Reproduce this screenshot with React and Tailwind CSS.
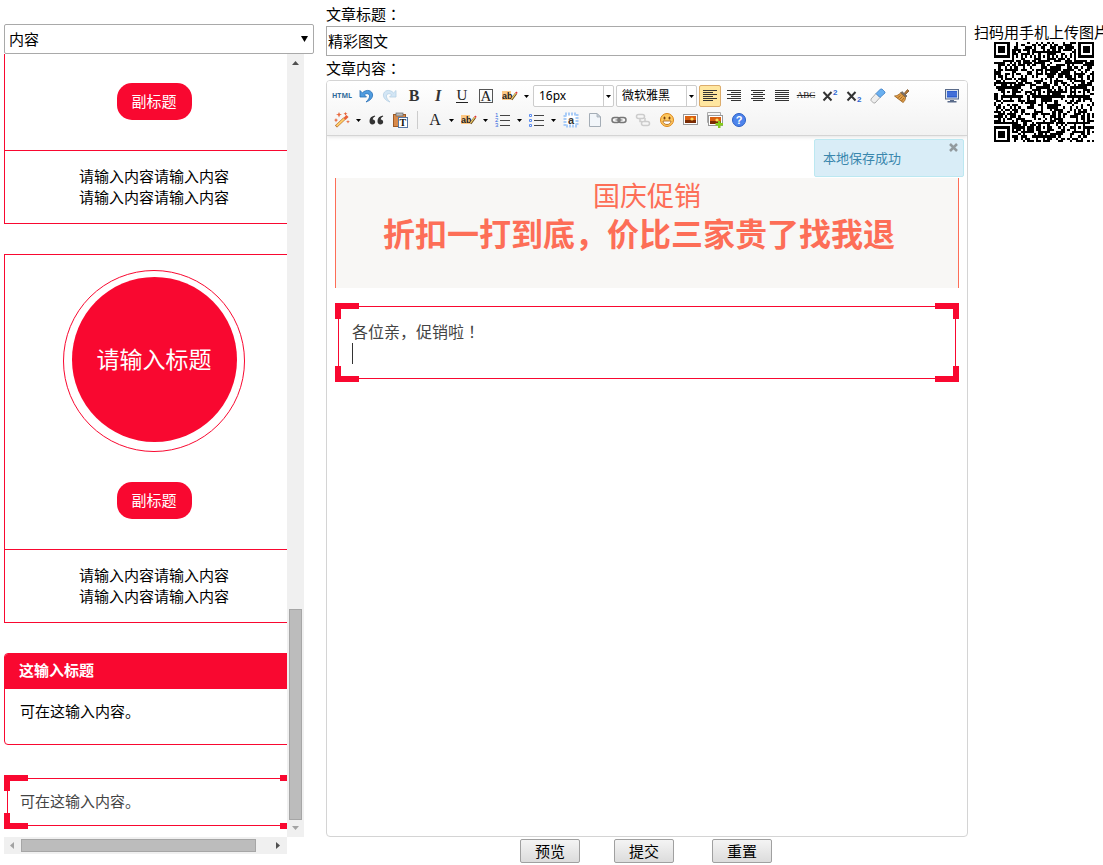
import { useState } from 'react';

const QR_SIZE = 45;

function finderCell(x, y) {
  const d = Math.max(Math.abs(x - 3), Math.abs(y - 3));
  return d !== 2 && d < 4;
}

function qrCells() {
  const cells = [];
  const centers = [6, 22, 38];
  let seed = 20141;
  for (let y = 0; y < QR_SIZE; y++) {
    for (let x = 0; x < QR_SIZE; x++) {
      seed = (seed * 1103515245 + 12345) % 2147483648;
      let on = (seed >> 12) % 100 < 52;
      if (x === 6 || y === 6) on = (x + y) % 2 === 0;
      centers.forEach((cy) =>
        centers.forEach((cx) => {
          const d = Math.max(Math.abs(x - cx), Math.abs(y - cy));
          if (d < 3) on = d !== 1;
        })
      );
      if (x < 8 && y < 8) on = finderCell(x, y);
      if (x > 36 && y < 8) on = finderCell(x - 38, y);
      if (x < 8 && y > 36) on = finderCell(x, y - 38);
      if (on) cells.push(`M${x} ${y}h1v1h-1z`);
    }
  }
  return cells.join('');
}

function QrCode() {
  return (
    <svg className="w-[100px] h-[100px]" viewBox="0 0 45 45" shapeRendering="crispEdges" role="img" aria-label="二维码">
      <path d={qrCells()} fill="#000" />
    </svg>
  );
}

function Icon({ children }) {
  return (
    <svg className="w-4 h-4" viewBox="0 0 16 16" fill="none">
      {children}
    </svg>
  );
}

function Caret() {
  return (
    <svg className="w-[5px] h-[3px]" viewBox="0 0 5 3">
      <path d="M0 0h5L2.5 3z" fill="#000" />
    </svg>
  );
}

function Tool({ title, active, menu, children }) {
  return (
    <button
      type="button"
      title={title}
      aria-label={title}
      className={
        active
          ? 'flex h-[22px] shrink-0 items-center rounded-xs border border-[#dcac6c] bg-[#ffe69f]'
          : 'flex h-[22px] shrink-0 items-center'
      }
    >
      <span className={active ? 'flex w-5 justify-center' : 'flex w-[22px] justify-center'}>{children}</span>
      {menu && (
        <span className="flex w-[10px] justify-center">
          <Caret />
        </span>
      )}
    </button>
  );
}

function Combo({ label, options }) {
  return (
    <div className="relative h-[22px] w-[81px] shrink-0">
      <select
        aria-label={label}
        className="block h-[22px] w-full appearance-none rounded-xs border border-[#ccc] bg-white pl-[5px] text-xs leading-5 text-black"
      >
        {options.map((o) => (
          <option key={o}>{o}</option>
        ))}
      </select>
      <span className="pointer-events-none absolute inset-y-px right-px flex w-[10px] items-center justify-center border-l border-[#ccc]">
        <Caret />
      </span>
    </div>
  );
}

function Lines({ rows }) {
  return (
    <Icon>
      {rows.map(([x, w], i) => (
        <rect key={i} x={x} y={2 + i * 2} width={w} height="1" fill="#333" />
      ))}
    </Icon>
  );
}

function Highlight() {
  return (
    <Icon>
      <rect x="0" y="3" width="9" height="9" fill="#fdc883" />
      <text x="0" y="11" fontSize="9" fontWeight="bold" fill="#222" fontFamily="Liberation Sans">
        ab
      </text>
      <path d="M14 5.500 9.500 11.500" stroke="#6b4a1a" strokeWidth="2.200" />
      <path d="M14 5 9.500 11" stroke="#f6d36b" strokeWidth="1.200" />
      <path d="m13.200 4.700 1.500 1.300 1-1.200-1.500-1.300z" fill="#e0353b" />
    </Icon>
  );
}

function Undo({ color, edge }) {
  return (
    <path
      d="M2 2.500v6.500h6.500L6.300 6.800c2.500-2.300 6-.800 5.200 2.200-.4 1.600-1.500 3-3.500 5 4-1.300 6.600-3.800 6.600-7C14.600 2.300 8.300.600 4.400 4.900z"
      fill={color}
      stroke={edge}
      strokeWidth=".8"
    />
  );
}

function Picture({ x = 0, y = 2 }) {
  return (
    <>
      <rect x={x + 0.5} y={y + 0.5} width="14" height="10" fill="#fff" stroke="#999" />
      <rect x={x + 2} y={y + 2} width="11" height="7" fill="#d9600f" />
      <rect x={x + 2} y={y + 6} width="11" height="3" fill="#7a2b04" />
      <circle cx={x + 9} cy={y + 5} r="1.600" fill="#ffd75a" />
    </>
  );
}

function ToolbarTop() {
  return (
    <div className="flex items-center gap-[2px]">
      <Tool title="源代码">
        <span className="font-['Open_Sans'] text-[7px] font-bold text-[#2f6a9a]">HTML</span>
      </Tool>
      <Tool title="撤销">
        <Icon>
          <Undo color="#4f9ce0" edge="#2a6fb5" />
        </Icon>
      </Tool>
      <Tool title="重做">
        <Icon>
          <g transform="matrix(-1 0 0 1 16 0)">
            <Undo color="#d3e6f5" edge="#b6d0e5" />
          </g>
        </Icon>
      </Tool>
      <Tool title="加粗">
        <span className="font-['Liberation_Serif'] text-base font-bold text-[#333]">B</span>
      </Tool>
      <Tool title="斜体">
        <span className="font-['Liberation_Serif'] text-base font-bold italic text-[#333]">I</span>
      </Tool>
      <Tool title="下划线">
        <span className="border-b border-[#222] px-px font-['Liberation_Serif'] text-[15px] leading-[13px] text-[#222]">U</span>
      </Tool>
      <Tool title="字符边框">
        <span className="flex h-3.5 w-3.5 items-center justify-center border border-[#555] font-['Liberation_Serif'] text-[15px] text-[#222]">
          A
        </span>
      </Tool>
      <Tool title="突出显示" menu>
        <Highlight />
      </Tool>
      <Combo label="字号" options={['16px', '12px', '14px', '18px', '24px']} />
      <Combo label="字体" options={['微软雅黑', '宋体', '黑体']} />
      <Tool title="居左对齐" active>
        <Lines rows={[[1, 14], [1, 10], [1, 14], [1, 10], [1, 14], [1, 10]]} />
      </Tool>
      <Tool title="居右对齐">
        <Lines rows={[[1, 14], [5, 10], [1, 14], [5, 10], [1, 14], [5, 10]]} />
      </Tool>
      <Tool title="居中对齐">
        <Lines rows={[[1, 14], [3, 10], [1, 14], [3, 10], [1, 14], [3, 10]]} />
      </Tool>
      <Tool title="两端对齐">
        <Lines rows={[[1, 14], [1, 14], [1, 14], [1, 14], [1, 14], [1, 14]]} />
      </Tool>
      <Tool title="删除线">
        <span className="font-['Liberation_Serif'] text-[9px] text-[#222] line-through">ABC</span>
      </Tool>
      <Tool title="上标">
        <Icon>
          <path d="m1.500 4 8 8.500M9.500 4l-8 8.500" stroke="#333" strokeWidth="2" />
          <text x="11" y="7" fontSize="8" fontWeight="bold" fill="#2f66d0" fontFamily="Liberation Sans">2</text>
        </Icon>
      </Tool>
      <Tool title="下标">
        <Icon>
          <path d="m1.500 4 8 8.500M9.500 4l-8 8.500" stroke="#333" strokeWidth="2" />
          <text x="11" y="14" fontSize="8" fontWeight="bold" fill="#2f66d0" fontFamily="Liberation Sans">2</text>
        </Icon>
      </Tool>
      <Tool title="清除格式">
        <Icon>
          <path d="m1 11 5-5.500 4 4-5 5.500H3.500L1 12.500z" fill="#eee" stroke="#999" strokeWidth=".8" />
          <path d="m6 5.500 4.500-4.500H12l3 3v1l-5 4.500z" fill="#6ab0f0" stroke="#3f7fc4" strokeWidth=".8" />
        </Icon>
      </Tool>
      <Tool title="格式刷">
        <Icon>
          <path d="m10.500 5 3-3.500L15 3l-3.500 3.500z" fill="#b5793a" stroke="#754919" strokeWidth=".7" />
          <path d="M8 3.500 13 8l-1.500 1.500L6.500 5z" fill="#7a716a" stroke="#4c443d" strokeWidth=".5" />
          <path d="M6.500 5 11.500 9.500c0 2-1 4-2.500 5L.500 8C3 8 5 6.500 6.500 5z" fill="#e2a04a" stroke="#965d1b" strokeWidth=".8" />
          <path d="m3.500 10 3-2.500m-1 4 3-3m-1 4.500 2.500-3" stroke="#965d1b" strokeWidth=".8" />
        </Icon>
      </Tool>
      <div className="ml-auto">
        <Tool title="全屏">
          <Icon>
            <rect x="1.500" y="1.500" width="13" height="9.500" fill="#d9e2ee" stroke="#5a6b8a" />
            <rect x="3" y="3" width="10" height="6.500" fill="#2f5fd0" />
            <path d="M3 5h10M3 7h10" stroke="#6f95ea" strokeWidth=".6" />
            <path d="M6 12h4v1H6zM3.500 13h9v1.500h-9z" fill="#5a6b8a" />
          </Icon>
        </Tool>
      </div>
    </div>
  );
}

function ToolbarBottom() {
  return (
    <div className="flex items-center gap-[2px]">
      <Tool title="自动排版" menu>
        <Icon>
          <path d="m2 14.500 8.500-8" stroke="#b05f25" strokeWidth="3" />
          <path d="m2.500 14 8-7.500" stroke="#ffcf6b" strokeWidth="1.800" />
          <path d="m10.500 7 3-3" stroke="#e8603a" strokeWidth="3" />
          <path d="m5 0 .9 1.900 2.100.6-2.100.8L5 5.500l-.9-2.200L2 2.500l2.100-.6zM11.500 0l.7 1.200 1.400.4-1.400.7-.7 1.400-.7-1.400-1.400-.7 1.400-.4zM2 6l.7 1.600 1.600.5-1.600.7L2 10.500l-.7-1.700L0 8.100l1.300-.5zM14 8l.6 1.200 1.400.4-1.400.6-.6 1.300-.6-1.300-1.400-.6 1.400-.4z" fill="#e8683c" />
        </Icon>
      </Tool>
      <Tool title="引用">
        <Icon>
          <path d="M7 3.500C3.500 4 1.500 6 1.500 9c0 2 1 3.500 2.900 3.500C6 12.500 7.200 11.400 7.200 10S6.200 7.500 4.800 7.500c0-1.400.8-2.500 2.400-3zM15 3.500c-3.500.5-5.500 2.500-5.500 5.500 0 2 1 3.500 2.900 3.500 1.600 0 2.800-1.100 2.800-2.500s-1-2.500-2.400-2.500c0-1.400.8-2.500 2.400-3z" fill="#333" />
        </Icon>
      </Tool>
      <Tool title="只粘贴文本">
        <Icon>
          <rect x="1.500" y="2.500" width="12" height="12" fill="#d98a4a" stroke="#9c5a25" />
          <rect x="4" y="1" width="7" height="3" fill="#bbb" stroke="#666" strokeWidth=".7" />
          <rect x="6.500" y="5.500" width="9" height="10" fill="#fff" stroke="#5577a5" />
          <text x="7.500" y="14" fontSize="10" fontWeight="bold" fill="#111" fontFamily="Liberation Serif">T</text>
        </Icon>
      </Tool>
      <span className="mx-1 h-[18px] w-px bg-[#ccc]" />
      <Tool title="字体颜色" menu>
        <span className="font-['Liberation_Serif'] text-base text-[#222]">A</span>
      </Tool>
      <Tool title="背景色" menu>
        <Highlight />
      </Tool>
      <Tool title="有序列表" menu>
        <Icon>
          <text x="0" y="5" fontSize="6" fill="#2f66e0" fontFamily="Liberation Sans">1</text>
          <text x="0" y="10" fontSize="6" fill="#2f66e0" fontFamily="Liberation Sans">2</text>
          <text x="0" y="15" fontSize="6" fill="#2f66e0" fontFamily="Liberation Sans">3</text>
          <path d="M5 3.500h10M5 8.500h10M5 13.500h10" stroke="#444" />
        </Icon>
      </Tool>
      <Tool title="无序列表" menu>
        <Icon>
          <path d="M5 3.500h10M5 8.500h10M5 13.500h10" stroke="#444" />
          <path d="M.5 2.500h2v2h-2zM.5 7.500h2v2h-2zM.5 12.500h2v2h-2z" stroke="#5b8cf0" />
        </Icon>
      </Tool>
      <Tool title="锚点">
        <Icon>
          <rect x="2" y="2" width="12" height="12" fill="#fff" stroke="#a9ccf7" strokeWidth="3" strokeDasharray="2 1" />
          <text x="5" y="12" fontSize="11" fontWeight="bold" fill="#333" fontFamily="Liberation Sans">a</text>
        </Icon>
      </Tool>
      <Tool title="模板">
        <Icon>
          <path d="M2.500 1.500H10L13.500 5v9.500h-11z" fill="#f2f6fa" stroke="#a4adb6" />
          <path d="M10 1.500V5h3.500z" fill="#c9d3dd" stroke="#a4adb6" strokeWidth=".8" />
        </Icon>
      </Tool>
      <Tool title="超链接">
        <Icon>
          <rect x="1" y="5.500" width="8" height="5" rx="2.500" stroke="#777" strokeWidth="1.500" />
          <rect x="7" y="5.500" width="8" height="5" rx="2.500" stroke="#777" strokeWidth="1.500" />
          <path d="M4.500 8h7" stroke="#777" strokeWidth="1.200" />
        </Icon>
      </Tool>
      <Tool title="取消链接">
        <Icon>
          <rect x="1.500" y="2.500" width="8" height="4" rx="2" stroke="#ccc" strokeWidth="1.500" />
          <rect x="6.500" y="9.500" width="8" height="4" rx="2" stroke="#ccc" strokeWidth="1.500" />
          <path d="M5 6.500v3h2M10 6v3" stroke="#ccc" strokeWidth="1.500" />
        </Icon>
      </Tool>
      <Tool title="表情">
        <Icon>
          <circle cx="8" cy="8" r="6.500" fill="#fdc860" stroke="#dd8518" />
          <ellipse cx="5.500" cy="6" rx="1" ry="1.500" fill="#7a4210" />
          <ellipse cx="10.500" cy="6" rx="1" ry="1.500" fill="#7a4210" />
          <path d="M4 9h8c0 2-1.800 3.500-4 3.500S4 11 4 9z" fill="#fff" stroke="#a55c10" strokeWidth=".8" />
        </Icon>
      </Tool>
      <Tool title="图片">
        <Icon>
          <Picture />
        </Icon>
      </Tool>
      <Tool title="多图上传">
        <Icon>
          <path d="M.5.500h13v10H.5z" fill="#f5f5f5" stroke="#aaa" />
          <Picture x={1} y={3} />
          <path d="M11 9h2.500v2H16v2.500h-2.500V16H11v-2.500H8.500V11H11z" fill="#84cc1c" />
        </Icon>
      </Tool>
      <Tool title="帮助">
        <Icon>
          <circle cx="8" cy="8" r="6.500" fill="#4d84ec" stroke="#2b5fc4" />
          <text x="8" y="12" textAnchor="middle" fontSize="11" fontWeight="bold" fill="#fff" fontFamily="Liberation Sans">?</text>
        </Icon>
      </Tool>
    </div>
  );
}

// full-width punctuation that sits in the middle of its cell
function Mark({ children }) {
  return <span className="font-['Noto_Sans_CJK_JP',sans-serif]">{children}</span>;
}

function CornerFrame({ children }) {
  const corner = 'absolute h-4 w-6 border-[#f90830]';
  return (
    <div className="relative p-[3px]">
      <span className={`${corner} top-0 left-0 border-t-6 border-l-6`} />
      <span className={`${corner} top-0 right-0 border-t-6 border-r-6`} />
      <span className={`${corner} bottom-0 left-0 border-b-6 border-l-6`} />
      <span className={`${corner} right-0 bottom-0 border-r-6 border-b-6`} />
      <div className="border border-[#f90830] text-[#444]">{children}</div>
    </div>
  );
}

function TitleCard({ round }) {
  return (
    <section className={round ? 'border border-[#f90830] pt-[15px]' : 'border border-t-0 border-[#f90830] pt-[29px]'}>
      {round && (
        <div className="mx-auto mb-[30px] flex h-[182px] w-[182px] justify-center rounded-full border border-[#f90830] pt-[6px]">
          <h2 className="flex h-[165px] w-[165px] items-center justify-center rounded-full bg-[#f90830] text-[23px] text-white">
            请输入标题
          </h2>
        </div>
      )}
      <h3 className="mx-auto mb-[30px] flex h-[37px] w-[75px] items-center justify-center rounded-[15px] bg-[#f90830] text-white">
        副标题
      </h3>
      <div className="border-t border-[#f90830] py-[15px] text-center leading-[21px]">
        <p>请输入内容请输入内容</p>
        <p>请输入内容请输入内容</p>
      </div>
    </section>
  );
}

function Templates() {
  return (
    <div className="grid w-[300px] grid-cols-[283px_17px]">
      <div className="overflow-hidden">
        <div className="flex w-[300px] flex-col gap-[30px] pb-2">
          <TitleCard />
          <TitleCard round />
          <section className="overflow-hidden rounded border border-[#f90830]">
            <h3 className="bg-[#f90830] px-3.5 pt-[6px] pb-2 font-bold leading-[21px] text-white">这输入标题</h3>
            <p className="px-[15px] pt-3 pb-[22px] leading-[21px]">可在这输入内容。</p>
          </section>
          <CornerFrame>
            <p className="px-3 pt-3 pb-3.5 leading-5">可在这输入内容。</p>
          </CornerFrame>
        </div>
      </div>
      <div className="flex flex-col items-center bg-[#f0f0f0]">
        <svg className="h-[17px] w-[17px]" viewBox="0 0 17 17">
          <path d="M5 11h7L8.500 7z" fill="#505050" />
        </svg>
        <div className="mt-auto h-[211px] w-[13px] border border-[#a6a6a6] bg-[#bcbcbc]" />
        <svg className="h-[17px] w-[17px]" viewBox="0 0 17 17">
          <path d="M5 6h7l-3.500 4z" fill="#a3a3a3" />
        </svg>
      </div>
      <div className="flex items-center bg-[#f0f0f0]">
        <svg className="h-[17px] w-[17px]" viewBox="0 0 17 17">
          <path d="M10 5v7L6 8.500z" fill="#a3a3a3" />
        </svg>
        <div className="h-[13px] w-[235px] border border-[#a6a6a6] bg-[#bcbcbc]" />
        <svg className="ml-auto h-[17px] w-[17px]" viewBox="0 0 17 17">
          <path d="M6 5v7l4-3.500z" fill="#505050" />
        </svg>
      </div>
    </div>
  );
}

function FormButton({ children }) {
  return (
    <button
      type="button"
      className="h-6 w-[60px] rounded-xs border border-[#a0a0a0] bg-linear-to-b from-[#f4f4f4] to-[#dcdcdc] leading-5"
    >
      {children}
    </button>
  );
}

export default function App() {
  const [title, setTitle] = useState('精彩图文');
  const [saved, setSaved] = useState(true);

  return (
    <main className="flex overflow-hidden bg-white pl-1 font-['Noto_Sans','Noto_Sans_CJK_SC',sans-serif] text-[15px] text-black">
      <aside className="w-[310px] shrink-0 pt-6">
        <div className="relative">
          <select
            aria-label="模板分类"
            className="block h-[30px] w-full appearance-none rounded-xs border border-[#a9a9a9] bg-white pl-1 leading-7"
          >
            <option>内容</option>
            <option>标题</option>
          </select>
          <svg className="pointer-events-none absolute top-3 right-1.5 h-1.5 w-[7px]" viewBox="0 0 7 6">
            <path d="M0 0h7L3.500 6z" />
          </svg>
        </div>
        <Templates />
      </aside>

      <form className="ml-3 min-w-0 flex-1 pt-1">
        <label htmlFor="title" className="block pb-[2px] leading-5">
          文章标题<Mark>：</Mark>
        </label>
        <div className="pr-[2px]">
          <input
            id="title"
            value={title}
            onChange={(e) => setTitle(e.target.value)}
            className="block h-[30px] w-full border border-[#a9a9a9] px-px pb-[2px]"
          />
        </div>
        <p className="pt-[2px] pb-[2px] leading-5">
          文章内容<Mark>：</Mark>
        </p>
        <div className="overflow-hidden rounded border border-[#d4d4d4]">
          <div className="flex flex-col gap-[2px] border-b border-[#d4d4d4] bg-linear-to-b from-white to-[#f2f2f2] p-1 shadow-[0_1px_4px_rgba(0,0,0,0.12)]">
            <ToolbarTop />
            <ToolbarBottom />
          </div>
          <div className="relative min-h-[700px] px-2 pt-[42px]">
            {saved && (
              <div className="absolute top-[3px] right-[3px] h-[38px] w-[150px] rounded-xs border border-[#bce8f1] bg-[#d9edf7] px-2 text-[13px] leading-9 text-[#3a87ad]">
                本地保存成功
                <button
                  type="button"
                  aria-label="关闭"
                  onClick={() => setSaved(false)}
                  className="absolute top-[3px] right-[5px]"
                >
                  <svg className="h-[9px] w-[9px]" viewBox="0 0 9 9">
                    <path d="m1 1 7 7M8 1 1 8" stroke="#929a9e" strokeWidth="2.500" />
                  </svg>
                </button>
              </div>
            )}
            <div className="h-[110px] border-x border-[#fd6e57] bg-[#f8f7f5] text-center text-[#fd6e57]">
              <h2 className="text-[27px] leading-9">国庆促销</h2>
              <h1 className="pr-4 text-[32px] font-bold leading-10">折扣一打到底，价比三家贵了找我退</h1>
            </div>
            <div className="mt-[15px]">
              <CornerFrame>
                <div className="px-[13px] py-3.5 text-base leading-[21px]">
                  <p>
                    各位亲，促销啦<Mark>！</Mark>
                  </p>
                  <div className="h-[21px] w-px bg-[#333]" />
                </div>
              </CornerFrame>
            </div>
          </div>
        </div>
        <div className="flex pt-[2px] pb-[2px] pl-[194px]">
          <FormButton>预览</FormButton>
          <span className="w-[34px]" />
          <FormButton>提交</FormButton>
          <span className="w-[38px]" />
          <FormButton>重置</FormButton>
        </div>
      </form>

      <aside className="ml-1.5 w-[129px] shrink-0 overflow-hidden pt-6">
        <p className="pb-[2px] leading-4 whitespace-nowrap">扫码用手机上传图片</p>
        <div className="pl-5">
          <QrCode />
        </div>
      </aside>
    </main>
  );
}
